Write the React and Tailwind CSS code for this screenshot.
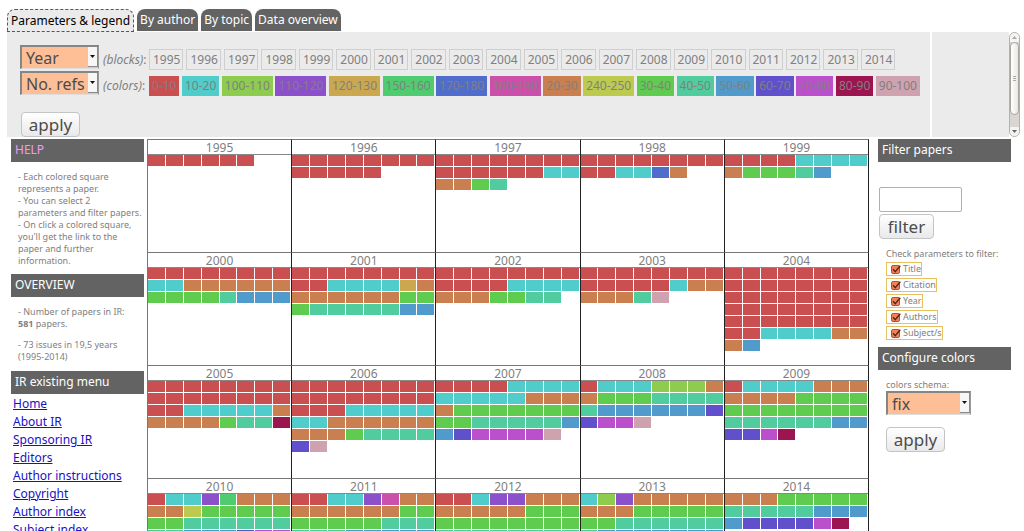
import React from "react";

const COLORS = {
  r: "bg-[#c94f50]",
  c: "bg-[#50cccb]",
  l: "bg-[#8ecc50]",
  v: "bg-[#8c50cb]",
  y: "bg-[#cba850]",
  e: "bg-[#50cc70]",
  b: "bg-[#506dcb]",
  m: "bg-[#cb50aa]",
  o: "bg-[#c97f50]",
  k: "bg-[#bccb50]",
  g: "bg-[#5fcc50]",
  t: "bg-[#50cc9e]",
  s: "bg-[#509bcb]",
  i: "bg-[#6050cb]",
  p: "bg-[#ba50cb]",
  d: "bg-[#9c1450]",
  n: "bg-[#cfa2b0]",
};

const RANGES = [
  ["r", "0-10"],
  ["c", "10-20"],
  ["l", "100-110"],
  ["v", "110-120"],
  ["y", "120-130"],
  ["e", "150-160"],
  ["b", "170-180"],
  ["m", "180-190"],
  ["o", "20-30"],
  ["k", "240-250"],
  ["g", "30-40"],
  ["t", "40-50"],
  ["s", "50-60"],
  ["i", "60-70"],
  ["p", "70-80"],
  ["d", "80-90"],
  ["n", "90-100"],
];

const RANGE_OF = Object.fromEntries(RANGES);

// One letter per paper, eight papers per row.
const BLOCKS = [
  ["1995", "rrrrrr"],
  ["1996", "rrrrrrrr rrrrr"],
  ["1997", "rrrrrrrr rrrrrrcc oogt"],
  ["1998", "rrrrrrrr rrccbo"],
  ["1999", "rrrrcccc ogggts"],
  ["2000", "rrrrrrrr ccoooooo ggggtsss"],
  ["2001", "rrrrrrrr rrccccyo oooooogg gtttttss"],
  ["2002", "rrrrrrrr rrrrcccc oooggtt"],
  ["2003", "rrrrrrrr rrrrrcoo oootn"],
  ["2004", "rrrrrrrr rrrrrrrr rrrrrrrr rrrrrrrr rrrrrrrr rrccccoo os"],
  ["2005", "rrrrrrrr rrrrrrrr rrccccco oooogttd"],
  ["2006", "rrrrrrrr rrrrrrrr rrrccccc ccoooooo ooogtttt in"],
  ["2007", "rrrrcccc cccccooo oggggggg ggttttts sippppn"],
  ["2008", "rccclllo ogggtttt tssssssi ippn"],
  ["2009", "rccccooo oooogggg gggggggg ttttttss iipd"],
  ["2010", "rccveooo ookggggg ggtttttt ttsssipp"],
  ["2011", "rrccvmoo oooooogg gggggttt tttsssss"],
  ["2012", "rrcvvooo oooooggg gggggggg tttttttt"],
  ["2013", "clvooooo oooggggg ggtttttt tsssssss"],
  ["2014", "oooggggg tttttsss siiiipd"],
];

const LINKS = [
  "Home",
  "About IR",
  "Sponsoring IR",
  "Editors",
  "Author instructions",
  "Copyright",
  "Author index",
  "Subject index",
];

function Tab({ children }) {
  return (
    <button role="tab" aria-selected="false" className="h-[22px] rounded-t-lg bg-[#636363] px-[3px] text-[12px] text-white">
      {children}
    </button>
  );
}

function Dropdown({ label, options, className }) {
  return (
    <span className={"grid " + className}>
      <select
        aria-label={label}
        className="col-start-1 row-start-1 h-6 w-full appearance-none border-t-2 border-l-2 border-r border-b border-t-[#858585] border-l-[#858585] border-r-[#9a9a9a] border-b-[#dedede] bg-[#ffbf96] pl-1 text-[16px] leading-5 text-[#4c4c4c]"
      >
        {options.map((o) => (
          <option key={o}>{o}</option>
        ))}
      </select>
      <span className="pointer-events-none col-start-1 row-start-1 my-[2px] mr-px flex w-[10px] items-center justify-center justify-self-end border-r border-b border-[#8a8a8a] bg-[#f6f6f6]">
        <svg width="5" height="3" viewBox="0 0 5 3">
          <path d="M0 0h5L2.5 3z" fill="#111" />
        </svg>
      </span>
    </span>
  );
}

function PushButton({ children, className = "" }) {
  return (
    <button
      className={
        "h-[25px] rounded border border-[#c4c4c4] bg-linear-to-b from-white to-[#e9e9e9] text-[17px] leading-5 text-[#4c4c4c] " +
        className
      }
    >
      {children}
    </button>
  );
}

function Heading({ children, className = "text-white" }) {
  return <h2 className={"h-[23px] bg-[#636363] px-1 text-[12px] leading-[22px] " + className}>{children}</h2>;
}

function Check({ children }) {
  return (
    <label className="flex h-[14px] items-center gap-[2px] border border-[#e8c060] pl-1 text-[9px] leading-3">
      <span className="grid">
        <input
          type="checkbox"
          defaultChecked
          className="col-start-1 row-start-1 size-[9px] appearance-none rounded-xs border border-[#a8563a] bg-[#f08158]"
        />
        <svg className="pointer-events-none col-start-1 row-start-1" width="10" height="9" viewBox="0 0 10 9">
          <path d="M2 4.2 4.2 6.6 9.3.8" fill="none" stroke="#5c2413" strokeWidth="1.4" />
        </svg>
      </span>
      {children}
    </label>
  );
}

function Block({ year, rows }) {
  return (
    <section className="h-[113px] border-t border-r border-t-[#777] border-r-[#222]">
      <h3 className="h-[15px] border-b border-[#888] text-center text-[12px] leading-[15px] text-[#808080]">{year}</h3>
      <div className="grid grid-cols-8">
        {[...rows.replaceAll(" ", "")].map((k, n) => (
          <button
            key={n}
            aria-label={"Paper, " + RANGE_OF[k] + " references"}
            className={"h-3 border-r border-b border-white " + COLORS[k]}
          />
        ))}
      </div>
    </section>
  );
}

function Scrollbar() {
  return (
    <div className="flex w-[11px] flex-col rounded-md border border-[#b5b0aa] bg-[#d9d6d2]">
      <span className="flex h-[9px] items-center justify-center rounded-t-md bg-[#f5f4f2]">
        <svg width="5" height="3" viewBox="0 0 5 3">
          <path d="M0 3h5L2.5 0z" fill="#aaa" />
        </svg>
      </span>
      <span className="flex h-[73px] items-center justify-center rounded-md border border-[#a9a49e] bg-linear-to-r from-white to-[#ebe8e4]">
        <svg width="3" height="6" viewBox="0 0 3 6">
          <path d="M0 .5h3M0 2.5h3M0 4.5h3" stroke="#aaa" />
        </svg>
      </span>
      <span className="mt-auto flex h-[9px] items-center justify-center rounded-b-md bg-[#f5f4f2]">
        <svg width="5" height="3" viewBox="0 0 5 3">
          <path d="M0 0h5L2.5 3z" fill="#666" />
        </svg>
      </span>
    </div>
  );
}

export default function App() {
  return (
    <div className="h-screen overflow-hidden bg-white pt-[9px] font-['Noto_Sans','Open_Sans',sans-serif] text-[12px] text-[#808080]">
      <div role="tablist" className="flex items-start gap-[3px] pl-[7px]">
        <button
          role="tab"
          aria-selected="true"
          className="h-[23px] rounded-t-lg bg-[#ebebeb] px-1 text-[12px] text-black outline outline-dashed -outline-offset-1 outline-[#555]"
        >
          Parameters &amp; legend
        </button>
        <Tab>By author</Tab>
        <Tab>By topic</Tab>
        <Tab>Data overview</Tab>
      </div>

      <div className="flex h-[105px] gap-[2px] pr-1 pl-[7px]">
        <div className="flex-1 bg-[#ebebeb] pt-3 pl-[13px] whitespace-nowrap">
          <div className="flex h-[26px] items-end">
            <Dropdown label="Blocks" options={["Year", "No. refs"]} className="w-[79px] self-center" />
            <span className="w-[50px] pl-1 text-[12px] leading-[21px]">
              <i>(blocks)</i>:
            </span>
            <div className="flex gap-[3px]">
              {BLOCKS.map(([year]) => (
                <span key={year} className="h-[21px] border border-[#cfcfcf] pr-[2px] pl-[3px] text-[12px] leading-[19px]">
                  {year}
                </span>
              ))}
            </div>
          </div>
          <div className="flex h-[26px] items-end">
            <Dropdown label="Colors" options={["No. refs", "Year"]} className="w-[79px] self-center" />
            <span className="w-[50px] pl-1 text-[12px] leading-[21px]">
              <i>(colors)</i>:
            </span>
            <div className="flex w-[771px] justify-between">
              {RANGES.map(([k, range]) => (
                <span key={k} className={"h-5 px-[3px] text-[12px] leading-5 " + COLORS[k]}>
                  {range}
                </span>
              ))}
            </div>
          </div>
          <PushButton className="mt-4 ml-px w-[59px]">apply</PushButton>
        </div>
        <div className="flex">
          <div className="w-[77px] bg-[#ebebeb]" />
          <Scrollbar />
        </div>
      </div>

      <div className="mt-[2px] flex pr-[13px] pl-[11px]">
        <aside className="w-[133px] shrink-0">
          <Heading className="text-[#f29af2]">HELP</Heading>
          <p className="mt-[9px] mb-[7px] pl-[7px] text-[9px] leading-3 whitespace-nowrap">
            - Each colored square
            <br />
            represents a paper.
            <br />- You can select 2<br />
            parameters and filter papers.
            <br />- On click a colored square,
            <br />
            you'll get the link to the
            <br />
            paper and further
            <br />
            information.
          </p>
          <Heading>OVERVIEW</Heading>
          <p className="mt-[9px] pl-[7px] text-[9px] leading-3">
            - Number of papers in IR:
            <br />
            <b>581</b> papers.
          </p>
          <p className="mt-[9px] mb-2 pl-[7px] text-[9px] leading-3">
            - 73 issues in 19,5 years
            <br />
            (1995-2014)
          </p>
          <Heading>IR existing menu</Heading>
          <nav className="flex flex-col items-start pt-px pl-[2px]">
            {LINKS.map((l) => (
              <a key={l} href="#" className="text-[12px] leading-[18px] text-[#1a10c4] underline">
                {l}
              </a>
            ))}
          </nav>
        </aside>

        <main className="mr-[9px] ml-[3px] grid flex-1 grid-cols-5 content-start border-l border-[#777]">
          {BLOCKS.map(([year, rows]) => (
            <Block key={year} year={year} rows={rows} />
          ))}
        </main>

        <aside className="w-[133px] shrink-0">
          <Heading>Filter papers</Heading>
          <div className="flex flex-col items-start pt-[25px] pl-px">
            <input aria-label="Filter text" className="h-[25px] w-[83px] rounded-xs border border-[#b0b0b0] bg-white px-1" />
            <PushButton className="mt-[2px] w-[55px]">filter</PushButton>
          </div>
          <fieldset className="flex flex-col items-start gap-[2px] pt-[9px] pb-[7px] pl-2">
            <legend className="contents">
              <span className="text-[9px] leading-3 whitespace-nowrap">Check parameters to filter:</span>
            </legend>
            <Check>Title</Check>
            <Check>Citation</Check>
            <Check>Year</Check>
            <Check>Authors</Check>
            <Check>Subject/s</Check>
          </fieldset>
          <Heading>Configure colors</Heading>
          <div className="flex flex-col items-start pt-[9px] pl-2">
            <span className="text-[9px] leading-3">colors schema:</span>
            <Dropdown label="Colors schema" options={["fix"]} className="w-[85px]" />
            <PushButton className="mt-3 w-[59px]">apply</PushButton>
          </div>
        </aside>
      </div>
    </div>
  );
}
